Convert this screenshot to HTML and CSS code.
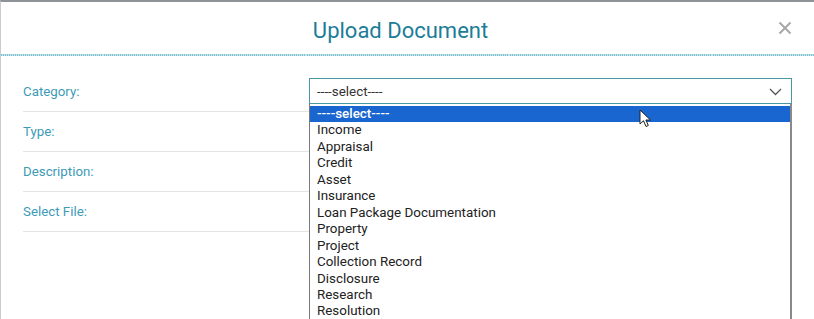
FILE: index.html
```html
<!DOCTYPE html>
<html>
<head>
	<meta name="viewport" content="width=device-width, initial-scale=1">
	<title>Upload Document</title>
<link rel="stylesheet" href="styles.css">
</head>
<body>

<div class="modal">
	<div class="modal-header">
		<h2 class="modal-title">Upload Document</h2>
		<svg class="close" width="14" height="14" viewBox="0 0 14 14"><path d="M1.5 1.5 L12.5 12.5 M12.5 1.5 L1.5 12.5" stroke="#a8a8a8" stroke-width="2"/></svg>
	</div>

	<div class="modal-body">
		<div class="row">
			<label class="label">Category:</label>
			<div class="field">
				<div class="select">
					<span>----select----</span>
					<svg class="chevron" width="13" height="8" viewBox="0 0 13 8"><path d="M1 1 L6.5 6.5 L12 1" fill="none" stroke="#555" stroke-width="1.3"/></svg>
				</div>
				<!-- open dropdown list -->
				<ul class="options">
					<li class="active">----select----</li>
					<li>Income</li>
					<li>Appraisal</li>
					<li>Credit</li>
					<li>Asset</li>
					<li>Insurance</li>
					<li>Loan Package Documentation</li>
					<li>Property</li>
					<li>Project</li>
					<li>Collection Record</li>
					<li>Disclosure</li>
					<li>Research</li>
					<li>Resolution</li>
				</ul>
				<svg class="cursor" width="14" height="20" viewBox="0 0 14 20"><path d="M1 1 L1 15 L4.5 11.8 L7 17.5 L9.3 16.5 L6.9 11 L11.5 11 Z" fill="#fff" stroke="#222" stroke-width="1" stroke-linejoin="round"/></svg>
			</div>
		</div>
		<div class="row">
			<label class="label">Type:</label>
			<div class="field"></div>
		</div>
		<div class="row">
			<label class="label">Description:</label>
			<div class="field"></div>
		</div>
		<div class="row">
			<label class="label">Select File:</label>
			<div class="field"></div>
		</div>
	</div>
</div>

</body>
</html>
```

FILE: styles.css
```css
body{
	margin: 0;
	padding: 0;
	font-family: Roboto, "Liberation Sans", sans-serif;
	background-color: white;
}

.modal{
	height: 317px;
	border-top: 2px solid #8e9399;
	border-left: 1px solid #c9ccd3;
	overflow: hidden;
}

.modal-header{
	position: relative;
	height: 52px;
	display: flex;
	align-items: center;
	justify-content: center;
	padding-right: 14px;
	border-bottom: 2px solid transparent;
	border-image: repeating-linear-gradient(90deg, #7fc2d0 0 1px, #c4e4ea 1px 2px) 2;
}

.modal-title{
	margin: 0;
	margin-top: 5px;
	font-size: 22px;
	font-weight: 400;
	color: #1b7d97;
}

.close{
	position: absolute;
	right: 22px;
	top: 19px;
}

.modal-body{
	padding: 16px 22px 0 22px;
}

.row{
	display: grid;
	grid-template-columns: 286px 1fr;
	align-items: center;
	height: 39px;
	border-bottom: 1.5px solid #e4e4e4;
}

.label{
	font-size: 13.3px;
	color: #3d9bb6;
}

.field{
	position: relative;
	height: 100%;
}

.select{
	position: absolute;
	top: 6px;
	left: 0;
	right: 0;
	height: 24px;
	border: 1px solid #4b97a6;
	background: white;
	display: flex;
	align-items: center;
	justify-content: space-between;
	padding: 0 9px 0 7px;
	font-size: 13.4px;
	color: #333;
	z-index: 2;
}

.chevron{
	margin-top: 1px;
}

.options{
	position: absolute;
	top: 32px;
	left: 0;
	right: 0;
	margin: 0;
	padding: 2px 0 0 0;
	list-style: none;
	background: white;
	border-left: 1px solid #7a7a7a;
	border-right: 2px solid #8a8a8a;
	z-index: 3;
}

.options li{
	font-size: 13.4px;
	line-height: 16.45px;
	color: #222;
	padding-left: 7px;
}

.options li.active{
	background-color: #1a66d1;
	color: white;
	font-weight: 500;
}

.cursor{
	position: absolute;
	left: 330px;
	top: 37px;
	z-index: 4;
}
```
